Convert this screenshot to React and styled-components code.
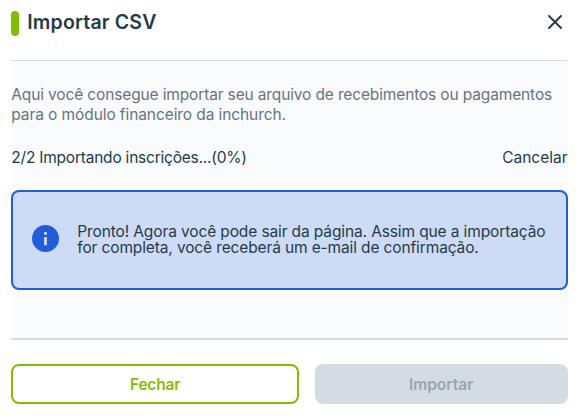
import styled, { createGlobalStyle } from "styled-components"

const GlobalStyle = createGlobalStyle`
  * {
    box-sizing: border-box;
  }
  body {
    margin: 0;
    background: #ffffff;
    color: #243b47;
    font-family: "Inter", "Liberation Sans", sans-serif;
    font-size: 15.5px;
  }
`
const Modal = styled.div`
  width: 586px;
  height: 418px;
  padding: 0 18.5px 0 11.3px;
  display: flex;
  flex-direction: column;
`
const Header = styled.header`
  height: 60px;
  padding: 0 5.5px 15px 0;
  display: flex;
  align-items: center;
`
const Marker = styled.span`
  width: 8px;
  height: 24.5px;
  margin: 2px 8px 0 0;
  border-radius: 4px;
  background: #84bd00;
`
const Title = styled.h1`
  flex: 1;
  margin: 0 0 2px;
  font-size: 19.5px;
  font-weight: 600;
  line-height: 24px;
`
const CloseButton = styled.button`
  width: 14px;
  height: 14px;
  margin-bottom: 1px;
  padding: 0;
  border: none;
  background: none;
  color: #243b47;
  cursor: pointer;
  svg {
    display: block;
  }
`
const Body = styled.main`
  height: 280px;
  padding-top: 24px;
  background: #fafbfd;
  border-top: 1.5px solid #d3dbe2;
  border-bottom: 2px solid #d5dce3;
`
const Line = styled.span`
  display: block;
  width: max-content;
  white-space: nowrap;
  letter-spacing: ${(props) => props.$spacing || 0}px;
`
const Description = styled.p`
  margin: 0;
  color: #65757e;
  line-height: 20px;
`
const Progress = styled.div`
  margin-top: 23px;
  display: flex;
  justify-content: space-between;
  line-height: 20px;
`
const Alert = styled.div`
  height: 100px;
  margin-top: 22px;
  padding: 0 18.4px;
  display: flex;
  align-items: center;
  border: 2px solid #1f5ddd;
  border-radius: 8px;
  background: #cedbf6;
  line-height: 16px;
  svg {
    flex: none;
    margin: -3px 18.6px 0 0;
  }
`
const Footer = styled.footer`
  padding-top: 24px;
  display: grid;
  grid-template-columns: 287.5px 1fr;
  gap: 16px;
`
const Button = styled.button`
  height: 40px;
  padding: 0;
  display: flex;
  align-items: center;
  justify-content: center;
  border: 2px solid ${(props) => (props.$muted ? "#d4dce3" : "#84bd00")};
  border-radius: 8px;
  background: ${(props) => (props.$muted ? "#d4dce3" : "#ffffff")};
  color: ${(props) => (props.$muted ? "#9ba5ac" : "#84bd00")};
  font-family: inherit;
  font-size: 15.5px;
  font-weight: 600;
  cursor: pointer;
`

const App = () => {
  return (
    <>
      <GlobalStyle />
      <Modal>
        <Header>
          <Marker />
          <Title><Line $spacing={0.17}>Importar CSV</Line></Title>
          <CloseButton aria-label="Fechar">
            <svg width="14" height="14" viewBox="0 0 14 14" fill="none" stroke="currentColor" strokeWidth="1.9" strokeLinecap="round">
              <path d="M1 1l12 12M13 1L1 13" />
            </svg>
          </CloseButton>
        </Header>
        <Body>
          <Description>
            <Line $spacing={-0.14}>Aqui você consegue importar seu arquivo de recebimentos ou pagamentos</Line>
            <Line $spacing={-0.09}>para o módulo financeiro da inchurch.</Line>
          </Description>
          <Progress>
            <Line $spacing={-0.22}>2/2 Importando inscrições...(0%)</Line>
            <Line>Cancelar</Line>
          </Progress>
          <Alert>
            <svg width="27" height="27" viewBox="0 0 27 27">
              <circle cx="13.5" cy="13.5" r="13.5" fill="#1f5ddd" />
              <path d="M12.1 7h2.8v2.7h-2.8zM12.1 12h2.8v8.2h-2.8z" fill="#cedbf6" />
            </svg>
            <div>
              <Line $spacing={-0.12}>Pronto! Agora você pode sair da página. Assim que a importação</Line>
              <Line $spacing={-0.13}>for completa, você receberá um e-mail de confirmação.</Line>
            </div>
          </Alert>
        </Body>
        <Footer>
          <Button><Line $spacing={-0.2}>Fechar</Line></Button>
          <Button $muted><Line>Importar</Line></Button>
        </Footer>
      </Modal>
    </>
  )
}

export default App
